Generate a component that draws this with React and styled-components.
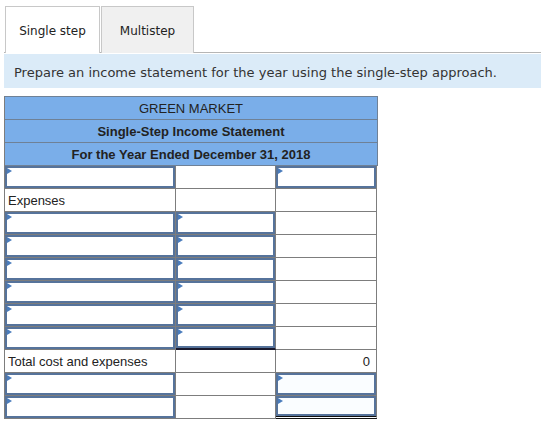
import styled, { createGlobalStyle } from "styled-components";

const GlobalStyle = createGlobalStyle`
  body {
    margin: 0;
    background: #fff;
    font-family: "DejaVu Sans", Verdana, sans-serif;
    color: #333;
  }
`;

const Page = styled.div`
  width: 541px;
  padding-top: 6px;
`;

const TabBar = styled.div`
  display: flex;
  margin-left: 4px;
  border-bottom: 1px solid #b5b5b5;
  height: 47px;
  box-sizing: border-box;
  padding-left: 1px;
`;

const Tab = styled.div`
  width: ${(p) => p.$width}px;
  height: 47px;
  box-sizing: border-box;
  border: 1px solid #c8c8c8;
  border-bottom: none;
  margin-right: 1px;
  padding-top: 2px;
  background: ${(p) => (p.$active ? "#fff" : "#f0f0f0")};
  display: flex;
  align-items: center;
  justify-content: center;
  font-size: 12px;
  color: #222;
`;

const Instruction = styled.div`
  margin: 1px 0 0 4px;
  height: 34px;
  box-sizing: border-box;
  padding: 2px 0 0 10px;
  background: #dbebf8;
  display: flex;
  align-items: center;
  font-size: 13px;
  color: #333;
`;

const Sheet = styled.div`
  margin: 8px 0 0 4px;
  width: 373px;
  border-left: 1px solid #7d7d7d;
  border-top: 1px solid #6f8196;
  font-family: "Liberation Sans", Arial, sans-serif;
  font-size: 13px;
  color: #222;
`;

const HeadRow = styled.div`
  height: 23px;
  box-sizing: border-box;
  background: #7aaee9;
  border-right: 1px solid #6f8196;
  border-bottom: 1px solid #6f8196;
  display: flex;
  align-items: center;
  justify-content: center;
  font-size: 13px;
  font-weight: ${(p) => (p.$bold ? 700 : 400)};
  color: #222;
`;

const Row = styled.div`
  display: grid;
  grid-template-columns: 171px 100px 101px;
  height: 23px;
`;

const Cell = styled.div`
  position: relative;
  box-sizing: border-box;
  border-right: 1px solid #7d7d7d;
  border-bottom: ${(p) =>
    p.$under === "double"
      ? "3px double #111"
      : p.$under === "single"
      ? "2px solid #1a1a2e"
      : "1px solid #7d7d7d"};
  display: flex;
  align-items: center;
  justify-content: ${(p) => (p.$right ? "flex-end" : "flex-start")};
  padding: 0 ${(p) => (p.$right ? 6 : 3)}px;
  background: ${(p) => (p.$input && p.$tint ? "#fafdff" : "#fff")};
  box-shadow: ${(p) => (p.$input ? "inset 0 0 0 2px #56739b" : "none")};

  ${(p) =>
    p.$input &&
    `
    &::before {
      content: "";
      position: absolute;
      left: 2px;
      top: 2px;
      border-top: 3px solid transparent;
      border-bottom: 3px solid transparent;
      border-left: 5px solid #4a7cbc;
    }
  `}
`;

const rows = [
  { cells: [{ input: true }, {}, { input: true }] },
  { cells: [{ text: "Expenses" }, {}, {}] },
  { cells: [{ input: true }, { input: true }, {}] },
  { cells: [{ input: true }, { input: true }, {}] },
  { cells: [{ input: true }, { input: true }, {}] },
  { cells: [{ input: true }, { input: true }, {}] },
  { cells: [{ input: true }, { input: true }, {}] },
  { cells: [{ input: true }, { input: true, under: "single" }, {}] },
  { cells: [{ text: "Total cost and expenses" }, {}, { text: "0", right: true }] },
  { cells: [{ input: true }, {}, { input: true, tint: true }] },
  { cells: [{ input: true }, {}, { input: true, tint: true, under: "double" }] },
];

export default function App() {
  return (
    <Page>
      <GlobalStyle />
      <TabBar>
        <Tab $active $width={95}>Single step</Tab>
        <Tab $width={93}>Multistep</Tab>
      </TabBar>
      <Instruction>
        Prepare an income statement for the year using the single-step approach.
      </Instruction>
      <Sheet>
        <HeadRow>GREEN MARKET</HeadRow>
        <HeadRow $bold>Single-Step Income Statement</HeadRow>
        <HeadRow $bold>For the Year Ended December 31, 2018</HeadRow>
        {rows.map((row, i) => (
          <Row key={i}>
            {row.cells.map((c, j) => (
              <Cell
                key={j}
                $input={c.input}
                $right={c.right}
                $under={c.under}
                $tint={c.tint}
              >
                {c.text}
              </Cell>
            ))}
          </Row>
        ))}
      </Sheet>
    </Page>
  );
}
